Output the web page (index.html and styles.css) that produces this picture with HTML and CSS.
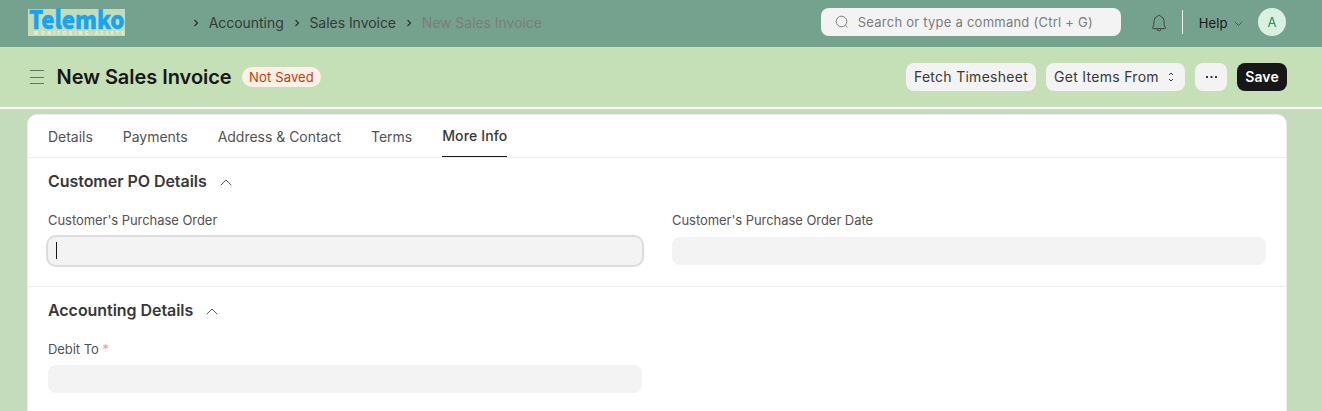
FILE: index.html
```html
<!DOCTYPE html>
<html lang="en">
<head>
<meta charset="utf-8">
<title>New Sales Invoice</title>
<link rel="stylesheet" href="styles.css">
</head>
<body>
<header class="navbar">
  <svg class="logo" viewBox="0 0 97 27">
    <text class="logo-name" x="1" y="19.500" textLength="95.500" lengthAdjust="spacingAndGlyphs">Telemko</text>
    <text class="logo-tag" x="6" y="26" textLength="90">MONITORING ASSETS</text>
  </svg>
  <nav class="breadcrumbs">
    <svg class="sep" viewBox="0 0 6 8"><path d="M1.5 1 4.5 4 1.5 7"/></svg>
    <a class="crumb">Accounting</a>
    <svg class="sep" viewBox="0 0 6 8"><path d="M1.5 1 4.5 4 1.5 7"/></svg>
    <a class="crumb">Sales Invoice</a>
    <svg class="sep" viewBox="0 0 6 8"><path d="M1.5 1 4.5 4 1.5 7"/></svg>
    <a class="crumb current">New Sales Invoice</a>
  </nav>
  <div class="search">
    <svg class="search-icon" viewBox="0 0 14 14"><circle cx="6.5" cy="6.5" r="5.3"/><path d="m10.400 10.400 2 2"/></svg>
    <span class="search-text">Search or type a command (Ctrl + G)</span>
  </div>
  <svg class="bell" viewBox="0 0 16 18"><path d="M5.8 14.6H2.1c-.7 0-1-.8-.5-1.3.9-.9 1.3-1.8 1.3-3.1V7.1a5.1 5.1 0 0 1 3.7-4.900 1.500 1.500 0 0 1 2.800 0 5.100 5.100 0 0 1 3.700 4.900v3.100c0 1.300.4 2.200 1.300 3.100.5.5.2 1.300-.5 1.300h-3.700M5.800 14.600a2.200 2.200 0 0 0 4.400 0M5.800 14.600h4.400"/></svg>
  <span class="divider"></span>
  <a class="help">Help</a>
  <svg class="help-caret" viewBox="0 0 9 6"><path d="m.8.8 3.700 3.700L8.200.8"/></svg>
  <span class="avatar">A</span>
</header>
<div class="page-head">
  <svg class="menu" viewBox="0 0 14 14"><path d="M0 .5h14M0 7.500h14M0 13.500h14"/></svg>
  <h1 class="title">New Sales Invoice</h1>
  <span class="status">Not Saved</span>
  <div class="actions">
    <button class="btn btn-fetch">Fetch Timesheet</button>
    <button class="btn btn-items">Get Items From<svg class="select-icon" viewBox="0 0 6 10"><path d="M1 3 3 1l2 2M1 7l2 2 2-2"/></svg></button>
    <button class="btn btn-more"><svg class="dots" viewBox="0 0 11 2"><path d="M0 0h2v2H0zM4.500 0h2v2h-2zM9 0h2v2H9z"/></svg></button>
    <button class="btn btn-save">Save</button>
  </div>
</div>
<main class="card">
  <nav class="tabs">
    <a class="tab">Details</a>
    <a class="tab">Payments</a>
    <a class="tab">Address &amp; Contact</a>
    <a class="tab">Terms</a>
    <a class="tab active">More Info</a>
  </nav>
  <section class="section">
    <h2 class="section-title">Customer PO Details<svg class="collapse" viewBox="0 0 12 7"><path d="M.7 6.200 6 1l5.300 5.200"/></svg></h2>
    <div class="fields">
      <div class="field">
        <span class="label">Customer's Purchase Order</span>
        <div class="input focused"><span class="caret"></span></div>
      </div>
      <div class="field">
        <span class="label">Customer's Purchase Order Date</span>
        <div class="input"></div>
      </div>
    </div>
  </section>
  <section class="section accounting">
    <h2 class="section-title">Accounting Details<svg class="collapse" viewBox="0 0 12 7"><path d="M.7 6.200 6 1l5.300 5.200"/></svg></h2>
    <div class="fields">
      <div class="field">
        <span class="label">Debit To <span class="required">*</span></span>
        <div class="input"></div>
      </div>
    </div>
  </section>
</main>
</body>
</html>
```

FILE: styles.css
```css
* { box-sizing: border-box; }
body {
  margin: 0;
  height: 411px;
  overflow: hidden;
  background: #c4dcbb;
  font-family: Inter, "Liberation Sans", sans-serif;
  font-size: 13px;
  letter-spacing: 0.26px;
  color: #383838;
}
svg { display: block; flex: none; fill: none; stroke: #525252; stroke-width: 1; overflow: visible; }

.navbar {
  display: flex;
  align-items: center;
  height: 47px;
  padding: 0 36px 3px 28px;
  background: #75a28e;
}
.logo { width: 97px; height: 27px; margin-top: 1px; background: #c5dcbb; stroke: none; }
.logo-name { font: 900 25px "Noto Sans CJK SC", "Open Sans", sans-serif; letter-spacing: 0; fill: #14a5f4; stroke: #14a5f4; stroke-width: 0.5; }
.logo-tag { font: 600 4.500px "Open Sans", sans-serif; letter-spacing: 0; fill: #f4f8f1; }
.breadcrumbs { display: flex; align-items: center; margin-left: 68px; font-size: 14px; letter-spacing: -0.04px; }
.sep { width: 6px; height: 8px; margin-top: 2px; stroke: #303030; stroke-width: 1.2; }
.crumb { margin: 2px 10px 0 9.700px; line-height: 20px; color: #383838; white-space: nowrap; }
.current { color: #7c7c7c; }
.search {
  display: flex;
  align-items: center;
  width: 300px;
  height: 28px;
  margin-left: auto;
  padding-left: 14px;
  border-radius: 8px;
  background: #f3f3f3;
}
.search-icon { width: 14px; height: 14px; stroke: #7c7c7c; }
.search-text { margin-left: 9px; letter-spacing: 0.24px; color: #7c7c7c; white-space: nowrap; }
.bell { width: 16px; height: 18px; margin: 2px 0 0 30px; stroke: #404844; }
.divider { width: 1px; height: 24px; margin-left: 15px; background: #ededed; }
.help { margin: 1px 0 0 16px; letter-spacing: 0.1px; color: #171717; }
.help-caret { width: 9px; height: 6px; margin: 4px 0 0 6px; }
.avatar {
  width: 28px;
  height: 28px;
  margin-left: 15.500px;
  border-radius: 50%;
  background: #daf0e1;
  color: #278f5e;
  font-size: 13px;
  line-height: 28px;
  text-align: center;
}

.page-head {
  display: flex;
  align-items: center;
  height: 62px;
  padding: 0 35px 0 30px;
  border-bottom: 2px solid #fff;
  background: #c5dfb6;
}
.menu { width: 14px; height: 14px; stroke: #68735f; }
.title { width: 175.500px; margin: 0 0 0 12.500px; font-size: 20px; font-weight: 600; letter-spacing: -0.04px; line-height: 24px; color: #171717; white-space: nowrap; }
.status {
  width: 79px;
  height: 20px;
  margin-left: 10px;
  border-radius: 10px;
  background: #fff1e7;
  color: #bd3e0c;
  letter-spacing: 0.15px;
  line-height: 20px;
  text-align: center;
}
.actions { display: flex; margin-left: auto; }
.btn {
  display: flex;
  align-items: center;
  justify-content: center;
  height: 28px;
  padding: 0;
  border: 0;
  border-radius: 8px;
  background: #f3f3f3;
  color: #383838;
  font: 400 14px/20px Inter, sans-serif;
  letter-spacing: 0.28px;
  white-space: nowrap;
}
.btn + .btn { margin-left: 10px; }
.btn-fetch { width: 130px; }
.btn-items { width: 139px; padding-right: 3px; }
.btn-more { width: 32px; }
.btn-save { width: 50px; background: #171717; color: #fff; font-weight: 600; letter-spacing: 0.1px; }
.select-icon { width: 6px; height: 10px; margin-left: 9px; stroke: #383838; }
.dots { width: 11px; height: 2px; fill: #383838; stroke: none; }

.card {
  width: 1260px;
  height: 310px;
  margin: 5px 0 0 27px;
  border: 1px solid #ededed;
  border-radius: 10px 10px 0 0;
  background: #fff;
}
.tabs { display: flex; gap: 30px; height: 43px; padding-left: 20px; border-bottom: 1px solid #ededed; font-size: 14px; letter-spacing: -0.02px; }
.tab { line-height: 44px; color: #525252; white-space: nowrap; }
.active { height: 42px; border-bottom: 1px solid #171717; color: #383838; font-weight: 500; letter-spacing: 0.14px; line-height: 42px; }
.section { height: 129px; padding: 12px 20px 0; border-bottom: 1px solid #ededed; }
.section-title { display: flex; align-items: center; margin: 0; font-size: 16px; font-weight: 600; letter-spacing: -0.05px; line-height: 22px; color: #383838; }
.collapse { width: 12px; height: 7px; margin: 3px 0 0 13px; }
.fields { display: grid; grid-template-columns: 594px 594px; column-gap: 30px; margin-top: 18px; }
.label { display: block; height: 20px; letter-spacing: -0.05px; line-height: 20px; color: #525252; }
.required { color: #e79a9a; }
.input { height: 28px; margin-top: 7px; border-radius: 8px; background: #f3f3f3; }
.accounting .input { margin-top: 6px; }
.focused { padding: 5px 0 0 8px; box-shadow: 0 0 0 2px #dcdcdc; }
.caret { display: block; width: 1px; height: 17px; background: #171717; }
```
